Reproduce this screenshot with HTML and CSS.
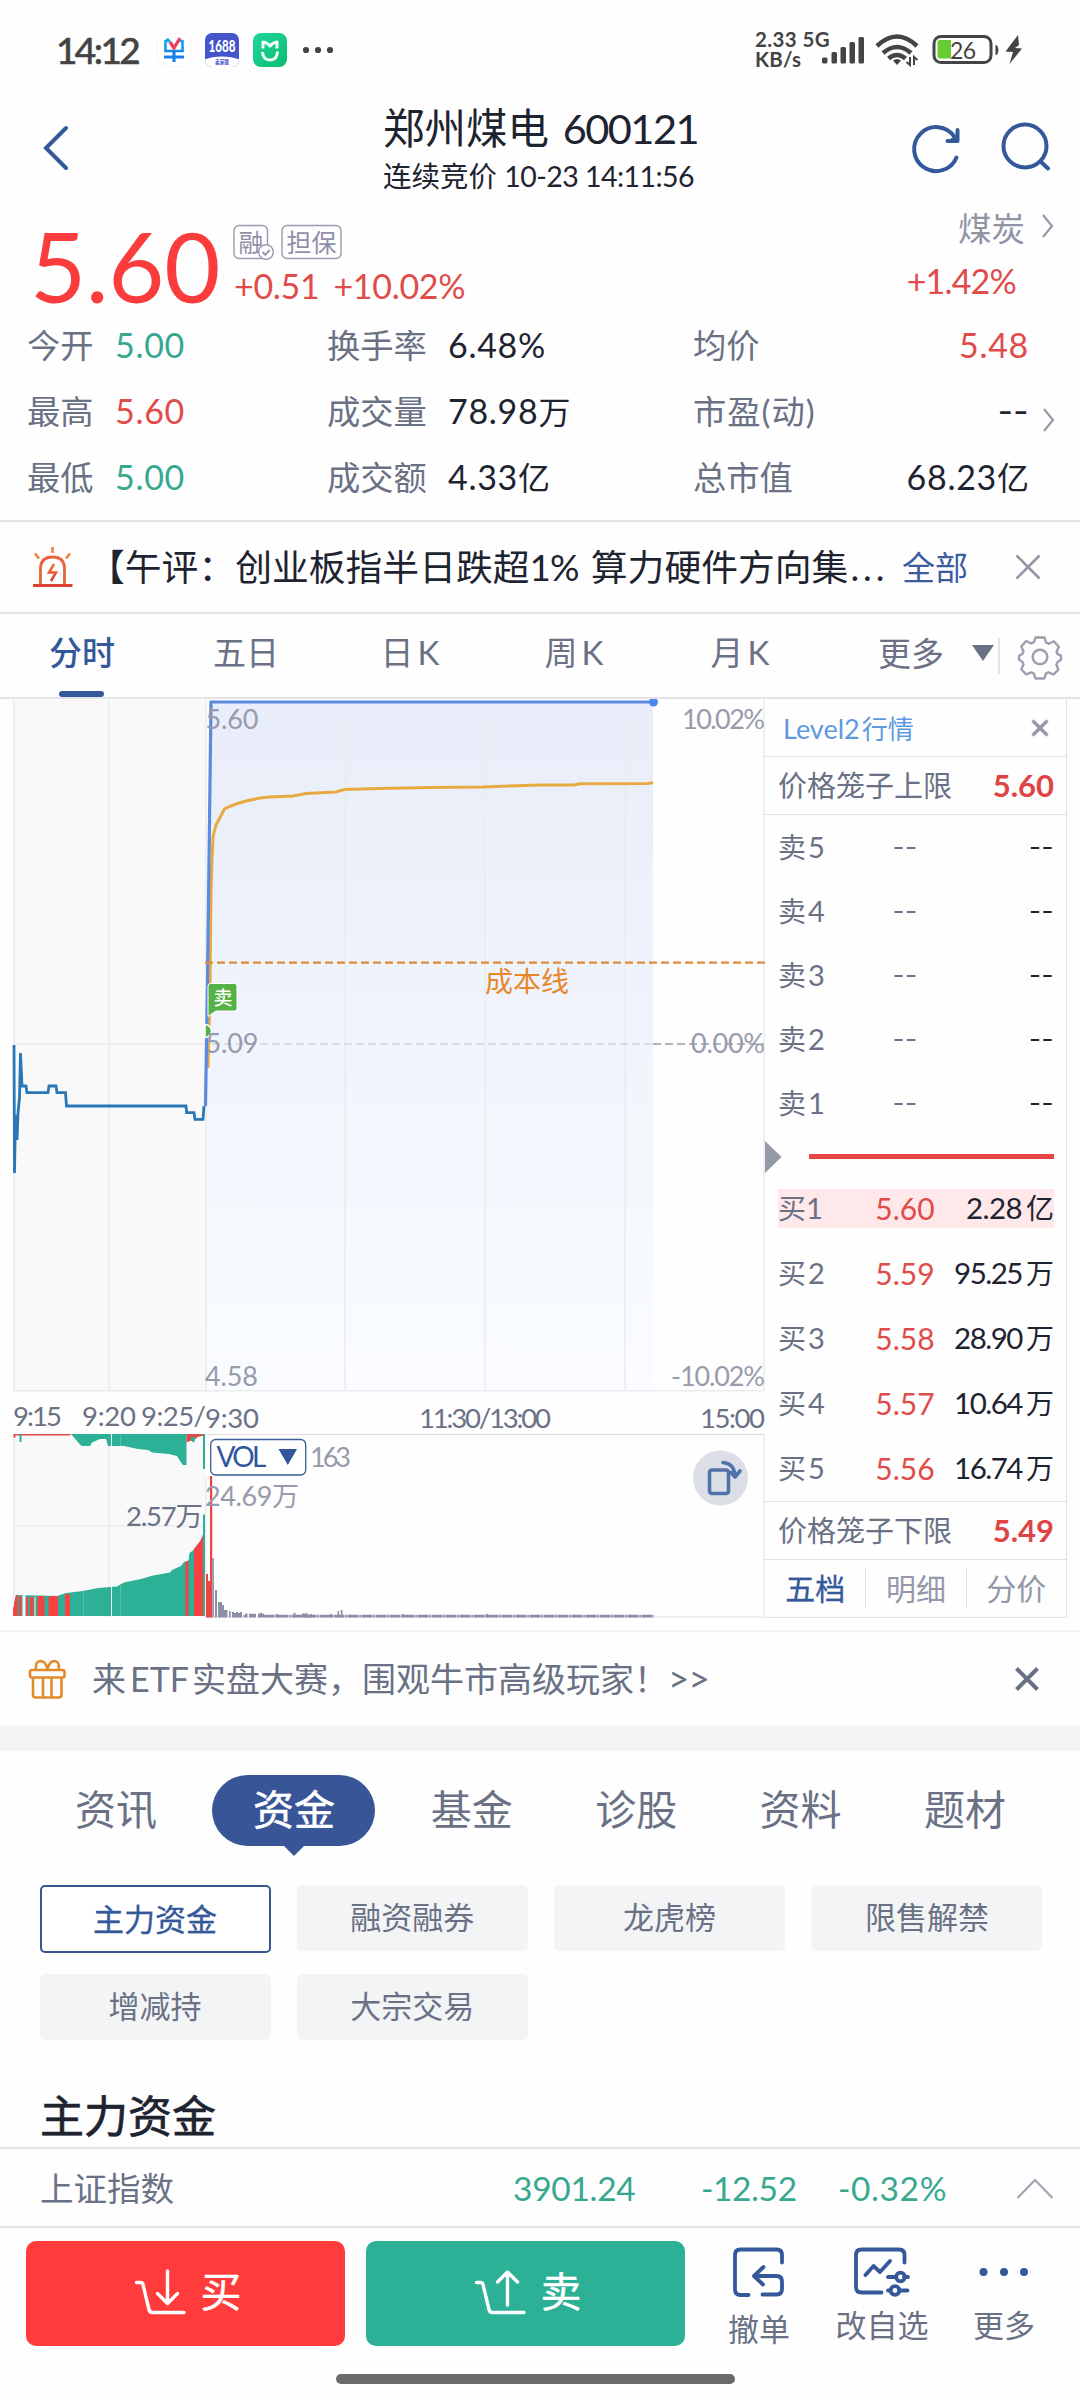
FILE: index.html
```html
<!DOCTYPE html>
<html lang="zh-CN">
<head>
<meta charset="utf-8">
<title>郑州煤电 600121</title>
<link rel="stylesheet" href="styles.css">
</head>
<body>
<div class="screen">

  <div class="status">
    <span class="status-time">14:12</span>
    <svg class="status-apps" width="178" height="40" viewBox="156 30 178 40">
      <defs>
        <linearGradient id="mi" x1="0" y1="0" x2="1" y2="1"><stop offset="0" stop-color="#1fd6a0"/><stop offset="1" stop-color="#0cbc6c"/></linearGradient>
        <linearGradient id="dan" x1="0" y1="0" x2="0" y2="1"><stop offset="0" stop-color="#12b0f0"/><stop offset="1" stop-color="#1668e8"/></linearGradient>
        <clipPath id="appclip"><rect x="205" y="33" width="34" height="34" rx="7"/></clipPath>
      </defs>
      <rect x="157.500" y="33.500" width="33" height="33" rx="8" fill="#fff" stroke="#f4f4f4"/>
      <path d="M167 38.500l3 3.500M169 41h-3.500v10h17v-10h-3M164 57h20M174 51v11" fill="none" stroke="url(#dan)" stroke-width="2.600"/>
      <path d="M170 42l4 6 6-10" fill="none" stroke="#ee3f62" stroke-width="3.200"/>
      <path d="M164 57h20" stroke="#1480ee" stroke-width="2.600"/>
      <path d="M174 51v11" stroke="#1480ee" stroke-width="2.600"/>
      <g clip-path="url(#appclip)">
        <rect x="205" y="33" width="34" height="34" fill="#4455cb"/>
        <ellipse cx="222" cy="66" rx="24" ry="9.500" fill="#fff"/>
      </g>
      <text x="208.500" y="51.500" class="app-num" textLength="27" lengthAdjust="spacingAndGlyphs">1688</text>
      <text x="215" y="64" class="app-cap" textLength="14" lengthAdjust="spacingAndGlyphs">卖家版</text>
      <rect x="253" y="33" width="34" height="34" rx="8" fill="url(#mi)"/>
      <path d="M263 48.500v-6.500q4 .5 7 4q3-3.500 7-4v6.500M262.500 52q.5 8 7.500 8t7.500-8.500" fill="none" stroke="#f3fffa" stroke-width="3" stroke-linejoin="round"/>
      <g fill="#444"><circle cx="306" cy="50" r="3.100"/><circle cx="318" cy="50" r="3.100"/><circle cx="330" cy="50" r="3.100"/></g>
    </svg>
    <div class="status-net"><span class="net-a">2.33 5G</span><span class="net-b">KB/s</span></div>
    <svg class="status-icons" width="202" height="40" viewBox="821 30 202 40">
      <g fill="#444">
        <rect x="822" y="57.500" width="5.500" height="6" rx="1.500"/><rect x="831.500" y="52" width="5.500" height="11.500" rx="1.500"/><rect x="840.500" y="47" width="5.500" height="16.500" rx="1.500"/><rect x="849.500" y="42" width="5.500" height="21.500" rx="1.500"/><rect x="858.500" y="37" width="5.500" height="26.500" rx="1.500"/>
        <path d="M897 65l-4-4.500q4-3 8 0z"/>
        <path d="M995.500 45h1q2 2 2 5t-2 5h-1z"/>
        <path d="M1018 35l-12.500 16.500 7.500.5-3.500 12 12.500-15.500-7-.500 4-3z"/>
      </g>
      <g fill="none" stroke="#444">
        <path d="M877 46q20-19 40 0M883 53q14-12 28 0M888.500 58.500q8.500-7 17 0" stroke-width="4.500"/>
        <path d="M910 57v8l-3.500-3M914 65v-8l3.500 3" stroke-width="2"/>
        <rect x="934" y="36.500" width="57" height="26" rx="7" stroke-width="3"/>
      </g>
      <path d="M939 40h12v18.500h-12q-1.500 0-1.500-3v-12q0-3.500 1.500-3.500z" fill="#66cc33"/>
      <text x="950" y="58.500" class="bat-num" textLength="26">26</text>
    </svg>
  </div>

  <div class="header">
    <svg class="back" width="30" height="50" viewBox="43 123 30 50"><path d="M67 128L47 148l20 20" fill="none" stroke="#34599b" stroke-width="4" stroke-linecap="round"/></svg>
    <div class="title">
      <div class="title-main">郑州煤电 <span>600121</span></div>
      <div class="title-sub">连续竞价 <span>10-23 14:11:56</span></div>
    </div>
    <svg class="header-icons" width="140" height="56" viewBox="910 120 140 56">
      <g fill="none" stroke="#34599b" stroke-width="4" stroke-linecap="round" stroke-linejoin="round">
        <path d="M956.500 157.500A22 22 0 1 1 954.500 137"/><path d="M957.500 130v11h-10"/>
        <path d="M950 140h7v-5z" fill="#34599b" stroke-width="1"/>
        <circle cx="1025" cy="146" r="21.500"/><path d="M1040.500 161.500l7.500 7"/>
      </g>
    </svg>
  </div>

  <div class="quote">
    <div class="price">5.60</div>
    <div class="price-side">
      <svg width="112" height="38" viewBox="232 223 112 38">
        <g fill="none" stroke="#9a9bb0" stroke-width="1.400"><rect x="234" y="225.500" width="33.500" height="33" rx="5"/><rect x="282" y="225.500" width="59" height="33" rx="5"/></g>
        <text x="238.500" y="251.500" class="badge-text" textLength="24">融</text>
        <text x="286.500" y="251.500" class="badge-text" textLength="50">担保</text>
        <circle cx="266" cy="252" r="7.300" fill="#fff" stroke="#9a9bb0" stroke-width="1.400"/>
        <path d="M262.500 252l2.800 2.800 4.500-4.800" fill="none" stroke="#9a9bb0" stroke-width="2"/>
      </svg>
      <div class="change"><span>+0.51</span><span class="pct">+10.02%</span></div>
    </div>
    <div class="sector">
      <div class="sector-name">煤炭<svg width="16" height="28" viewBox="0 0 16 28"><path d="M3 3l9 11-9 11" fill="none" stroke="#9599a8" stroke-width="2.200"/></svg></div>
      <div class="sector-chg">+1.42%</div>
    </div>
  </div>

  <div class="stats">
    <div class="stat-rows">
      <div class="stat-row"><label>今开</label><b class="down">5.00</b><label>换手率</label><b>6.48%</b><label>均价</label><b class="up right">5.48</b></div>
      <div class="stat-row"><label>最高</label><b class="up">5.60</b><label>成交量</label><b>78.98<i>万</i></b><label class="pe">市盈(动)</label><b class="right dash">--</b></div>
      <div class="stat-row"><label>最低</label><b class="down">5.00</b><label>成交额</label><b>4.33<i>亿</i></b><label>总市值</label><b class="right">68.23<i>亿</i></b></div>
    </div>
    <svg class="stats-more" width="16" height="28" viewBox="0 0 16 28"><path d="M3 3l9 11-9 11" fill="none" stroke="#9599a8" stroke-width="2.200"/></svg>
  </div>

  <div class="news">
    <svg width="42" height="44" viewBox="32 543 42 44">
      <defs><linearGradient id="al" x1="0" y1="0" x2="0" y2="1"><stop offset="0" stop-color="#f07a3c"/><stop offset="1" stop-color="#e03c30"/></linearGradient></defs>
      <path d="M40.500 582.500V567q0-12 12-12t12 12v15.500" fill="none" stroke="#e8643a" stroke-width="2.800"/>
      <path d="M33 583.500h39.500" stroke="#dc4234" stroke-width="3"/>
      <path d="M52.500 545v6M35 551.500l4 5M70 551.500l-4 5" stroke="#f0813c" stroke-width="2.600"/>
      <path d="M54 562l-5 8.500h7l-5 8.500" fill="none" stroke="url(#al)" stroke-width="2.600"/>
    </svg>
    <div class="news-text">【午评：创业板指半日跌超<span>1%</span> 算力硬件方向集<span class="dots">...</span></div>
    <div class="news-all">全部</div>
    <svg class="news-close" width="30" height="30" viewBox="0 0 30 30"><path d="M3.500 3.500l23 23M26.500 3.500l-23 23" stroke="#9396a6" stroke-width="2.600"/></svg>
  </div>

  <div class="periods">
    <div class="period on">分时</div><div class="period">五日</div><div class="period">日<span>K</span></div><div class="period">周<span>K</span></div><div class="period month">月<span>K</span></div>
    <div class="period more">更多<i></i></div>
    <div class="sep"></div>
    <svg class="gear" width="46" height="46" viewBox="-23 -23 46 46">
      <path d="M-4.500-19.500h9l1.500 5 3 1.300 4.800-2.500 5 5.500-2.200 5 1 2.400 3.400 1.500v4l-3.400 2.200-1.200 2.800 2 4.800-4.800 5-5-2.100-2.700 1.200-1.600 4.900h-8.800l-1.600-4.900-2.800-1.200-4.900 2.100-4.900-5.200 2.200-4.800-1.200-2.800-3.300-2v-4l3.500-1.800 1-2.500-2.200-4.900 4.900-5.500 4.900 2.500 2.900-1.300z" fill="none" stroke="#9b9fae" stroke-width="2.400" stroke-linejoin="round"/>
      <circle r="7.300" fill="none" stroke="#9b9fae" stroke-width="2.400"/>
    </svg>
  </div>

  <div class="market">
    <svg class="chart" width="765" height="920" viewBox="0 699 765 920">
      <defs>
        <linearGradient id="fill" x1="0" y1="0" x2="0" y2="1"><stop offset="0" stop-color="#e9edf9"/><stop offset=".5" stop-color="#f0f4fc"/><stop offset="1" stop-color="#fafcff"/></linearGradient>
      </defs>
      <rect x="14" y="700" width="192" height="691" fill="#f9f9f9"/>
      <rect x="14" y="1434" width="192" height="183" fill="#f9f9f9"/>
      <path d="M206 1106L211 702H653V1390H206z" fill="url(#fill)"/>
      <g stroke="#eaebed" stroke-width="1.600" fill="none">
        <path d="M14 700V1391M109 700V1391M206 700V1391M345 702V1391M485 702V1391M625 702V1391M764 700V1391M13 1390.700H765M14 1044H206"/>
        <path d="M14 1435V1617M109 1435V1617M206 1478V1617M764 1435V1617M14 1526H206M206 1617H765"/>
      </g>
      <path d="M14 1434.500H765" stroke="#dcdde0" stroke-width="1.200"/>
      <path d="M212 1044H653" stroke="#d0d5e4" stroke-width="1.600" stroke-dasharray="8 4"/>
      <path d="M653 1044H764" stroke="#989dab" stroke-width="1.600" stroke-dasharray="8 4"/>
      <path d="M208 1068L210 990 211 890 212 860 213 837 216 825 224.500 809 231 806 236 804 246 801 260 798 269 797 293 796 306 793.500 336 792 344 789.500 379 788.500 430 787.500 482 787 540 785 574 785 580 783.700 648 783.500 653 782.500" fill="none" stroke="#e8aa40" stroke-width="3"/>
      <path d="M205.500 1106L207.500 980 211 702H653" fill="none" stroke="#5b8ade" stroke-width="3.200"/>
      <circle cx="653.500" cy="702" r="4.500" fill="#4f86ea"/>
      <path d="M205 962.700H765" stroke="#e08a3c" stroke-width="2.200" stroke-dasharray="8 4"/>
      <path d="M14 1045L14.500 1173 15.500 1115 17 1140 18 1113 19.500 1098 20.500 1053 22 1086H26L27 1092.700H48L49 1086H56L57 1092.700H65.500L66.500 1106H186L186.600 1112.700H194L195 1119.300H203L204 1106" fill="none" stroke="#2877b8" stroke-width="2.800"/>
      <path d="M208 986q0-2.500 2.500-2.500h24q2.500 0 2.500 2.500v22.500q0 2.500-2.500 2.500h-18.500l-8 5.500z" fill="#56b146" stroke="#fff" stroke-width="1"/>
      <text x="213.500" y="1005" class="flag">卖</text>
      <path d="M205 1024.500a6.500 6.500 0 0 1 0 13z" fill="#56b146" stroke="#fff" stroke-width="1.500"/>

      <g class="axis">
        <text x="205.500" y="729" textLength="53">5.60</text><text x="205.500" y="1053" textLength="53">5.09</text><text x="205" y="1386" textLength="53">4.58</text>
        <text x="682" y="729" textLength="83">10.02%</text><text x="691" y="1053" textLength="74">0.00%</text><text x="671" y="1386" textLength="94">-10.02%</text>
      </g>
      <text x="485" y="991.500" class="cost" textLength="84">成本线</text>
      <g class="time">
        <text x="13" y="1426" textLength="49">9:15</text><text x="82" y="1426" textLength="54">9:20</text><text x="141" y="1426" textLength="65">9:25/</text><text x="205" y="1428" textLength="54">9:30</text>
        <text x="419" y="1428" textLength="132">11:30/13:00</text><text x="700" y="1428" textLength="65">15:00</text>
      </g>

      <path d="M71 1434L80 1444.500 82 1446H90L92 1442.500 100 1439H106L108 1446H124L138 1449 148 1450 152 1452.500 169 1454 177 1456 181.500 1463 183 1465H186.500V1434z" fill="#2cb096"/>
      <path d="M13.500 1434h57v1.500h-55v2h-2zM186.500 1434h18v1.500l-7 1.500-2 2h-3l-1 2-2.500 0-.5 1h-2z" fill="#e04a4a"/>
      <path d="M19.500 1434h2v8h-2zM191 1437h4v4l-2 1.500-2-3zM203 1434h2v35h-2z" fill="#2cb096"/>
      <path d="M13 1616V1611L14.500 1602 16 1595 57 1596 66 1593 83 1591 98 1588 117 1586.500 124 1582.500 141 1579 153 1575.500 170 1572.500 172 1570 181 1566 184 1562 188.500 1560.500 189.500 1553 193 1550.500 196 1546.500 200 1541.500 202 1538 203 1534V1616z" fill="#2cb096"/>
      <path d="M13 1616V1611L14.500 1602 16 1595H17.500V1616zM19 1596h2.500v20h-2.500zM30 1597h3.500v19h-3.500zM37.500 1596h7v20h-7zM48.500 1597l3-1h6.500v20h-9.500zM65 1594h5v22h-5zM26 1597h2v19h-2zM185.500 1562l3-1.500v55.500h-3zM194 1549l6-7.500 3-6.500v81h-9z" fill="#fa4040"/>
      <path d="M22.500 1595h3v21h-3zM34.500 1597h1v19h-1z" fill="#f9f3f2"/>
      <path d="M203 1514.500h2V1616h-2z" fill="#2cb096"/>
      <path d="M111.500 1434v12M111.500 1587v29" stroke="#e8f7f4"/>
      <path d="M83.500 1592v24M120.500 1586v30M120.500 1435v11" stroke="#5cc3ae" stroke-width=".8"/>
      <path d="M206 1617.500V1574h2v7h2V1476h2.200V1617.500z" fill="#ef4444"/>
      <path d="M212.300 1558h1.600v59.500h-1.600zM215 1590h2v27.500h-2zM218 1602h4v3h2v5h3.500v7.500h-9.500zM229 1611h1.700v6.500h-1.700zM232 1612h2v1h2v-1h2v1h2v-1h2v5.500h-10zM243.500 1615h1.500v-1.500h2.500v4h-4zM249 1613.800h7v3.700h-7zM258 1613.800h2v-1h2v1h2v3.700h-6zM276 1614h2v3.500h-2zM293.500 1613h2v4.500h-2zM302 1613.500h6v4h-6zM310 1614h2v3.500h-2zM330 1614h2v3.500h-2zM337.500 1611h1.600v6.500h-1.600zM340.800 1610h1.700v7.500h-1.700zM402 1614h2v3.500h-2zM486 1614h2v3.500h-2z" fill="#8b8ea5"/>
      <path d="M264 1616.100H654" stroke="#8b8ea5" stroke-width="2.900" stroke-dasharray="10.500 .8 2 .7"/>

      <rect x="210.700" y="1439.500" width="95" height="35.500" rx="5" fill="#fff" stroke="#3b5d94" stroke-width="1.300"/>
      <text x="216.500" y="1467" class="vol" textLength="50">VOL</text>
      <path d="M278.500 1449h18.500l-9.200 16z" fill="#31569c"/>
      <g class="axis"><text x="310" y="1467" textLength="41">163</text><text x="205" y="1505.500" textLength="94">24.69万</text></g>
      <g class="time"><text x="126" y="1526" textLength="77">2.57万</text></g>

      <circle cx="720.500" cy="1478" r="27.500" fill="#dddfe6"/>
      <g fill="none" stroke="#5072aa" stroke-width="3.600" stroke-linejoin="round" stroke-linecap="round"><rect x="709.500" y="1470" width="19" height="23.500" rx="2.500"/><path d="M723 1462.500q11 1 12 13M731 1472.500l4 4.500 5-6"/></g>
    </svg>

    <div class="book">
      <div class="book-head"><span>Level2<em>行情</em></span><svg width="18" height="18" viewBox="0 0 18 18"><path d="M1.500 1.500l15 15M16.500 1.500l-15 15" stroke="#9398a8" stroke-width="3.200"/></svg></div>
      <div class="cage"><span>价格笼子上限</span><b>5.60</b></div>
      <div class="asks">
        <div class="lvl"><span>卖<s>5</s></span><i>--</i><b>--</b></div>
        <div class="lvl"><span>卖<s>4</s></span><i>--</i><b>--</b></div>
        <div class="lvl"><span>卖<s>3</s></span><i>--</i><b>--</b></div>
        <div class="lvl"><span>卖<s>2</s></span><i>--</i><b>--</b></div>
        <div class="lvl"><span>卖<s>1</s></span><i>--</i><b>--</b></div>
      </div>
      <div class="ratio"><svg width="17" height="32" viewBox="0 0 17 32"><path d="M0 0l16.500 16L0 32z" fill="#9499a8"/></svg><div class="ratio-bar"></div></div>
      <div class="bids">
        <div class="lvl best"><span>买<s class="one">1</s></span><i>5.60</i><b>2.28<em>亿</em></b></div>
        <div class="lvl"><span>买<s>2</s></span><i>5.59</i><b>95.25<em>万</em></b></div>
        <div class="lvl"><span>买<s>3</s></span><i>5.58</i><b>28.90<em>万</em></b></div>
        <div class="lvl"><span>买<s>4</s></span><i>5.57</i><b>10.64<em>万</em></b></div>
        <div class="lvl"><span>买<s>5</s></span><i>5.56</i><b>16.74<em>万</em></b></div>
      </div>
      <div class="cage low"><span>价格笼子下限</span><b>5.49</b></div>
      <div class="book-tabs"><div class="on">五档</div><div>明细</div><div>分价</div></div>
    </div>
  </div>

  <div class="promo">
    <svg width="38" height="40" viewBox="28 1658 38 40"><g fill="none" stroke="#e28b2c" stroke-width="2.600" stroke-linejoin="round"><rect x="30" y="1669" width="34.500" height="7.500" rx="2"/><path d="M33 1677v16.500q0 3 3 3h22.500q3 0 3-3v-16.500M43 1677v19M51.500 1677v19M36 1668q-1-7.500 4.500-8 5 0 7 8 2-8 7-8 5.500.5 4 8"/></g></svg>
    <div class="promo-text">来<span class="etf">ETF</span>实盘大赛，围观牛市高级玩家！<span class="arr">&gt;&gt;</span></div>
    <svg class="promo-close" width="26" height="26" viewBox="0 0 26 26"><path d="M2.500 2.500l21 21M23.500 2.500l-21 21" stroke="#697085" stroke-width="4"/></svg>
  </div>

  <div class="band"></div>

  <div class="tabs">
    <div class="tab">资讯</div><div class="tab on">资金</div><div class="tab">基金</div><div class="tab">诊股</div><div class="tab">资料</div><div class="tab">题材</div>
  </div>

  <div class="chips">
    <div class="chip on">主力资金</div><div class="chip">融资融券</div><div class="chip">龙虎榜</div><div class="chip">限售解禁</div>
    <div class="chip">增减持</div><div class="chip">大宗交易</div>
  </div>

  <div class="section-title">主力资金</div>

  <div class="index-bar">
    <span class="index-name">上证指数</span><span class="i1">3901.24</span><span class="i2">-12.52</span><span class="i3">-0.32%</span>
    <svg width="38" height="22" viewBox="0 0 38 22"><path d="M1.500 20L19 2l17.500 18" fill="none" stroke="#a0a3b2" stroke-width="2.200"/></svg>
  </div>

  <div class="actions">
    <div class="btn buy">
      <svg width="52" height="48" viewBox="134 2268 52 48"><g fill="none" stroke="#fff" stroke-width="3.400" stroke-linecap="round" stroke-linejoin="round"><path d="M136.500 2282.500h4q2 0 2.500 2l6 25q.7 3 3.500 3h31.500M167.500 2271v32M157.500 2293.500l10 10 10-10"/></g></svg><span>买</span>
    </div>
    <div class="btn sell">
      <svg width="52" height="48" viewBox="474 2268 52 48"><g fill="none" stroke="#fff" stroke-width="3.400" stroke-linecap="round" stroke-linejoin="round"><path d="M476.500 2282.500h4q2 0 2.500 2l6 25q.7 3 3.500 3h31.500M507.500 2305v-32M497.500 2282l10-10 10 10"/></g></svg><span>卖</span>
    </div>
    <div class="tool t1">
      <svg width="56" height="54" viewBox="732 2245 56 54"><g fill="none" stroke="#34589a" stroke-width="3.800" stroke-linecap="round" stroke-linejoin="round"><path d="M783 2262.500V2255q0-5.500-5.500-5.500H741.500q-5.500 0-5.500 5.500v34.500q0 5.500 5.500 5.500h8M763.500 2294.500h14q5.500 0 5.500-5.500v-7.500q0-5.500-5.500-5.500H756M764.500 2267l-9.500 9 9 8.500"/></g></svg>
      <span>撤单</span>
    </div>
    <div class="tool t2">
      <svg width="60" height="54" viewBox="853 2245 60 54"><g fill="none" stroke="#34589a" stroke-width="3.800" stroke-linecap="round" stroke-linejoin="round"><path d="M905.500 2262.500V2255q0-5.500-5.500-5.500H862.500q-5.500 0-5.500 5.500v32q0 5.500 5.500 5.500h20M866.500 2275l8-9 6.500 6 10-11M889 2277h8M905 2277h4M889 2290.500h2M900.500 2290.500h8"/><circle cx="901.500" cy="2277" r="4.300"/><circle cx="896" cy="2290.500" r="4.300"/></g></svg>
      <span>改自选</span>
    </div>
    <div class="tool t3">
      <svg width="56" height="54" viewBox="977 2245 56 54"><g fill="#34589a"><circle cx="984.500" cy="2272" r="4"/><circle cx="1005" cy="2272" r="4"/><circle cx="1025" cy="2272" r="4"/></g></svg>
      <span>更多</span>
    </div>
  </div>
  <div class="home"></div>
</div>
</body>
</html>
```
FILE: styles.css
```css
* { box-sizing: border-box; }
body { margin: 0; background: #fff; }
i, em, b, s { font-style: normal; font-weight: 400; text-decoration: none; }
svg { display: block; flex: none; }

.screen {
  width: 1080px;
  height: 2400px;
  overflow: hidden;
  background: #fefefe;
  font-family: Lato, "Noto Sans CJK SC", sans-serif;
  color: #1e2330;
  white-space: nowrap;
}

/* status bar */
.status { display: flex; height: 100px; padding-left: 56px; color: #444; }
.status-time { width: 100px; line-height: 99px; font-size: 37px; font-weight: 500; letter-spacing: -2.600px; -webkit-text-stroke: .5px #444; }
.status-apps { margin-top: 30px; }
.status-net { display: flex; flex-direction: column; width: 66px; margin: 30px 0 0 421px; font-size: 20.500px; font-weight: 700; line-height: 19px; }
.net-a { letter-spacing: .4px; }
.net-b { margin-top: 1px; letter-spacing: .2px; }
.status-icons { margin-top: 30px; }
.app-num { font: 900 16px Lato, sans-serif; fill: #fff; }
.app-cap { font: 700 6px "Noto Sans CJK SC", sans-serif; fill: #4455cb; }
.bat-num { font: 400 23px Lato, sans-serif; fill: #444; }

/* header */
.header { display: flex; height: 112px; padding-left: 42px; }
.back { margin-top: 23px; }
.title { width: 838px; padding-left: 311px; }
.title-main { height: 56px; font-size: 41.5px; line-height: 56px; }
.title-main span { margin-left: 3px; letter-spacing: -1.500px; }
.title-sub { height: 40px; font-size: 28.5px; line-height: 40px; }
.title-sub span { letter-spacing: -.55px; }
.header-icons { margin-top: 20px; }

/* quote */
.quote { display: flex; height: 101px; padding-left: 30px; color: #df4c49; }
.price { width: 202px; height: 101px; font-size: 97px; line-height: 107px; color: #fb3c3c; letter-spacing: -.4px; }
.price-side { width: 520px; padding-top: 11px; }
.change { display: flex; gap: 14px; margin-top: 5px; padding-left: 2px; font-size: 34px; line-height: 40px; letter-spacing: -.3px; }
.pct { letter-spacing: -.3px; }
.badge-text { font: 400 25px "Noto Sans CJK SC", sans-serif; fill: #8f90a8; }
.sector { width: 304px; }
.sector-name { display: flex; justify-content: flex-end; height: 32px; gap: 15px; line-height: 32px; font-size: 33.5px; color: #9094a4; }
.sector-chg { margin-top: 17px; padding-right: 40px; text-align: right; font-size: 34px; line-height: 40px; letter-spacing: -.8px; }

/* key figures */
.stats { display: flex; height: 207px; padding-left: 27px; }
.stat-row { display: grid; grid-template-columns: 88px 212px 121px 245px 160px 176px; height: 66px; line-height: 64px; font-size: 33.3px; color: #6a7185; }
.stat-row b { color: #1e2330; font-size: 34px; letter-spacing: .7px; }
.stat-row b.right { text-align: right; }
.stat-row b.up { color: #df4c49; }
.stat-row b.down { color: #37a88f; }
.stat-row b.dash { font-family: Inter, sans-serif; font-size: 33px; letter-spacing: .5px; }
.stat-row i { margin-left: 0; font-size: 32px; letter-spacing: 0; }
.pe { letter-spacing: 1px; }
.stats-more { margin: 93px 0 0 12px; }

/* news ticker */
.news { display: flex; align-items: center; height: 94px; padding-left: 32px; border-top: 2px solid #e3e4e6; border-bottom: 2px solid #e3e4e6; }
.news-text { width: 816px; padding-left: 14px; font-size: 36.8px; line-height: 90px; }
.news-text span { margin-right: 3px; letter-spacing: -1px; }
.news-text .dots { margin: 0 0 0 2px; letter-spacing: 4px; }
.news-all { width: 123px; padding-left: 12px; font-size: 33px; line-height: 90px; color: #3b5c9e; }

/* period tabs */
.periods { display: flex; height: 85px; border-bottom: 2px solid #e3e4e6; color: #6a7185; }
.period { width: 164px; font-size: 33px; line-height: 77px; text-align: center; }
.period span { margin-left: 4px; }
.month { padding-left: 4px; }
.period.on { position: relative; font-weight: 500; color: #34589a; }
.period.on::after { content: ""; position: absolute; left: 59px; bottom: 0; width: 45px; height: 6px; border-radius: 3px; background: #34589a; }
.period.more { display: flex; align-items: center; width: 178px; height: 78px; padding-left: 58px; }
.period.more i { margin-left: 28px; border: solid transparent; border-width: 16px 11px 0; border-top-color: #6a7185; }
.sep { width: 1.500px; height: 36px; margin-top: 24px; background: #e3e4e6; }
.gear { margin: 20px 0 0 17px; }

/* chart + order book */
.market { display: flex; height: 933px; border-bottom: 2px solid #f0f1f2; }
.axis text { font: 400 27px Lato, "Noto Sans CJK SC", sans-serif; fill: #979bab; }
.time text { font: 400 27.500px Lato, "Noto Sans CJK SC", sans-serif; fill: #6c7286; }
.vol { font: 400 28px Lato, sans-serif; fill: #31569c; }
.cost { font: 400 28px "Noto Sans CJK SC", sans-serif; fill: #e8862a; }
.flag { font: 500 19px "Noto Sans CJK SC", sans-serif; fill: #fff; }

.book { width: 302px; height: 919px; border-right: 1.500px solid #dfe0e3; color: #6a7185; }
.book-head { display: flex; align-items: center; justify-content: space-between; height: 58px; padding: 0 17px 0 18px; border-bottom: 1px solid #dfe0e3; font-size: 27px; color: #5f9ae0; }
.book-head em { margin-left: 2px; font-size: 26px; }
.cage { display: flex; justify-content: space-between; height: 58px; padding: 0 12px 0 13px; border-bottom: 1px solid #dfe0e3; font-size: 29px; line-height: 57px; }
.cage b { font-size: 31px; font-weight: 700; color: #df4444; }
.lvl { display: grid; grid-template-columns: 90px 74px 1fr; height: 64px; margin: 0 12px 0 13px; font-size: 28px; line-height: 64px; }
.lvl s { margin-left: 2px; font-size: 29px; }
.lvl s.one { margin-left: 0; }
.lvl i { text-align: center; font-size: 30px; }
.lvl b { text-align: right; font-size: 29.500px; color: #1e2330; letter-spacing: -1.500px; }
.asks i, .asks b { font-family: Inter, sans-serif; font-size: 26px; letter-spacing: .5px; }
.lvl em { margin-left: 4px; font-size: 28px; letter-spacing: 0; }
.ratio { display: flex; align-items: center; height: 43px; }
.ratio svg { margin-right: 27px; }
.ratio-bar { width: 245px; height: 5px; background: #e64545; }
.bids { padding-top: 11px; }
.bids .lvl { height: 39px; margin-bottom: 26px; line-height: 38px; }
.bids .lvl i { color: #df4c49; }
.bids .best { background: #ffe8ea; }
.bids .best b { letter-spacing: -.6px; }
.cage.low { height: 59px; margin-top: -13px; border-top: 1px solid #dfe0e3; }
.book-tabs { display: grid; grid-template-columns: repeat(3, 1fr); height: 58px; padding: 8px 0; border-bottom: 1px solid #dfe0e3; text-align: center; font-size: 30px; line-height: 41px; color: #9498a8; }
.book-tabs div + div { border-left: 1px solid #dfe0e3; }
.book-tabs .on { color: #34589a; -webkit-text-stroke: .3px #34589a; }

/* promo */
.promo { display: flex; align-items: center; height: 93px; padding-left: 28px; color: #6a7185; }
.promo-text { width: 948px; padding-left: 26px; font-size: 34px; line-height: 92px; }
.etf { margin: 0 3px 0 4px; }
.arr { font-size: 37px; letter-spacing: -1px; }
.band { height: 26px; background: #f3f4f6; }

/* content tabs */
.tabs { display: flex; justify-content: space-between; height: 134px; padding: 24px 74px 0 75px; font-size: 41px; line-height: 70px; color: #6a7185; }
.tab.on { position: relative; width: 163px; height: 71px; margin: 0 -27px; border-radius: 36px; background: #385697; color: #fff; text-align: center; -webkit-text-stroke: .5px #fff; }
.tab.on::after { content: ""; position: absolute; left: 71px; top: 70px; border: solid transparent; border-width: 11px 11px 0; border-top-color: #385697; }

/* chips */
.chips { display: grid; grid-template-columns: repeat(4, 231px); grid-auto-rows: 66px; gap: 23px 26.300px; height: 189px; padding: 0 39.500px; }
.chip { border-radius: 5px; background: #f3f4f6; color: #6a7185; font-size: 31px; line-height: 64px; text-align: center; }
.chip.on { height: 68px; border: 2.500px solid #34588f; background: #fff; color: #34589a; -webkit-text-stroke: .3px #34589a; }

.section-title { height: 73px; padding-left: 40px; font-size: 44px; line-height: 85px; -webkit-text-stroke: .7px #1e2330; }

/* index bar */
.index-bar { display: flex; height: 81px; padding-left: 40px; border-top: 2px solid #e3e4e6; border-bottom: 2px solid #e3e4e6; font-size: 33.500px; line-height: 78px; color: #37a88f; }
.index-name { width: 473px; color: #6a7185; }
.i1 { width: 188px; letter-spacing: -.3px; }
.i2 { width: 137px; letter-spacing: -.4px; }
.i3 { width: 178px; letter-spacing: .6px; }
.index-bar svg { margin-top: 29px; }

/* actions */
.actions { display: flex; height: 146px; padding: 13px 0 0 26px; }
.btn { display: flex; justify-content: center; align-items: flex-start; gap: 15px; width: 319px; height: 105px; margin-right: 21px; padding-left: 4px; border-radius: 10px; color: #fff; font-size: 41px; line-height: 101px; -webkit-text-stroke: .4px #fff; }
.btn svg { margin-top: 27px; }
.buy { background: #ff3b3b; }
.sell { background: #2cb096; }
.tool { display: flex; flex-direction: column; align-items: center; padding-top: 4px; font-size: 31px; line-height: 40px; color: #6a7185; }
.tool span { margin-top: 6px; }
.t1 { width: 106px; }
.t1 span { margin-top: 10px; }
.t2 { width: 140px; }
.t3 { width: 104px; }
.home { width: 399px; height: 10px; margin-left: 336px; border-radius: 5px; background: #6a6a6a; }
```
